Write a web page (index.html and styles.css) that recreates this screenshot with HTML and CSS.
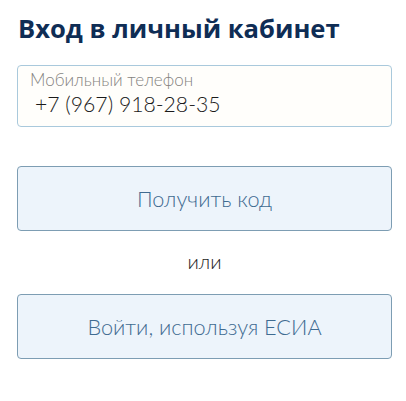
FILE: index.html
```html
<!DOCTYPE html>
<html lang="ru">
<head>
<meta charset="utf-8">
<link rel="stylesheet" href="styles.css">
</head>
<body>
<div class="login">
  <h1 class="title">Вход в личный кабинет</h1>
  <div class="field">
    <div class="field-label">Мобильный телефон</div>
    <div class="field-value">+7 (967) 918-28-35</div>
  </div>
  <button class="btn btn-code">Получить код</button>
  <div class="or">или</div>
  <button class="btn btn-esia">Войти, используя ЕСИА</button>
</div>
</body>
</html>
```
FILE: styles.css
```css
html, body {
  margin: 0;
  padding: 0;
  background: #ffffff;
}
body {
  font-family: "Open Sans", "Liberation Sans", sans-serif;
}
.login {
  width: 375px;
  margin-left: 17px;
  display: flex;
  flex-direction: column;
}
.title {
  margin: 12px 0 0 1px;
  font-size: 25.6px;
  line-height: 34px;
  font-weight: 700;
  color: #0f2d55;
}
.field {
  margin-top: 19px;
  height: 62px;
  box-sizing: border-box;
  border: 1px solid #a9c9dc;
  border-radius: 4px;
  background: #fffefb;
  padding: 4px 12px 0 12px;
}
.field-label {
  font-family: Lato, "Open Sans", sans-serif;
  font-size: 17px;
  line-height: 20px;
  font-weight: 300;
  color: #858380;
}
.field-value {
  font-family: Lato, "Open Sans", sans-serif;
  font-size: 21.2px;
  line-height: 28px;
  font-weight: 300;
  color: #1a1a1a;
  padding-left: 5px;
}
.btn {
  height: 65px;
  box-sizing: border-box;
  border: 1px solid #7d9db3;
  border-radius: 4px;
  background: #edf4fb;
  color: #3f6b91;
  font-family: Lato, "Open Sans", sans-serif;
  font-size: 21.7px;
  font-weight: 300;
  padding: 0;
  width: 100%;
}
.btn-code {
  margin-top: 39px;
}
.or {
  margin-top: 16px;
  text-align: center;
  font-family: Lato, "Open Sans", sans-serif;
  font-size: 20px;
  line-height: 28px;
  font-weight: 300;
  color: #1e1e1e;
}
.btn-esia {
  margin-top: 19px;
}
```
